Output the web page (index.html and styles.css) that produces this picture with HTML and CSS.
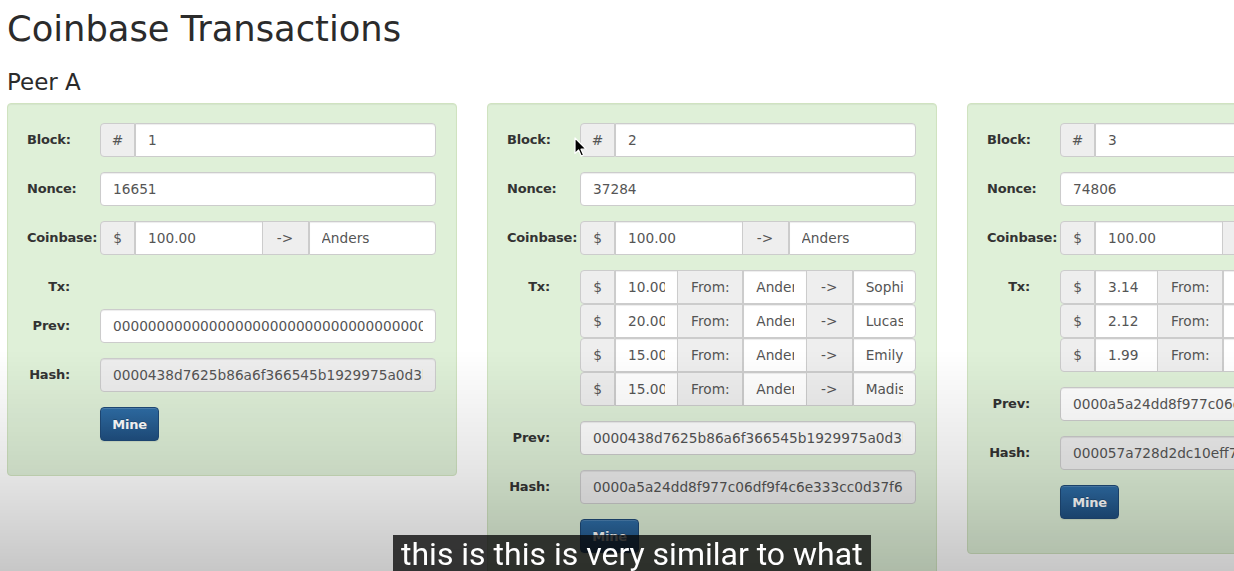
FILE: index.html
```html
<!DOCTYPE html>
<html>
<head>
<meta charset="utf-8">
<title>Coinbase Transactions</title>
<link rel="stylesheet" href="styles.css">
</head>
<body>
<div class="page">
  <h1 class="title">Coinbase Transactions</h1>
  <h3 class="peer">Peer A</h3>
  <div class="chain">

    <div class="card">
      <div class="row"><label class="lbl">Block:</label><div class="field"><div class="group"><span class="addon w-sym">#</span><input class="ctl" value="1"></div></div></div>
      <div class="row"><label class="lbl">Nonce:</label><div class="field"><input class="ctl solo" value="16651"></div></div>
      <div class="row"><label class="lbl">Coinbase:</label><div class="field"><div class="group"><span class="addon w-sym">$</span><input class="ctl" value="100.00"><span class="addon w-arrow">-&gt;</span><input class="ctl" value="Anders"></div></div></div>
      <div class="row row-empty"><label class="lbl">Tx:</label><div class="field"></div></div>
      <div class="row"><label class="lbl">Prev:</label><div class="field"><input class="ctl solo" value="0000000000000000000000000000000000000000000000000000000000000000"></div></div>
      <div class="row"><label class="lbl">Hash:</label><div class="field"><input class="ctl solo ro" readonly value="0000438d7625b86a6f366545b1929975a0d3b0c4d2a7e8c1f1c0b8a7e6d5c4b3"></div></div>
      <div class="row"><span class="lbl"></span><div class="field"><button class="btn">Mine</button></div></div>
    </div>

    <div class="card">
      <div class="row"><label class="lbl">Block:</label><div class="field"><div class="group"><span class="addon w-sym">#</span><input class="ctl" value="2"></div></div></div>
      <div class="row"><label class="lbl">Nonce:</label><div class="field"><input class="ctl solo" value="37284"></div></div>
      <div class="row"><label class="lbl">Coinbase:</label><div class="field"><div class="group"><span class="addon w-sym">$</span><input class="ctl" value="100.00"><span class="addon w-arrow">-&gt;</span><input class="ctl" value="Anders"></div></div></div>
      <div class="row"><label class="lbl">Tx:</label><div class="field">
        <div class="group"><span class="addon w-sym">$</span><input class="ctl" value="10.00"><span class="addon w-from">From:</span><input class="ctl" value="Anders"><span class="addon w-arrow">-&gt;</span><input class="ctl" value="Sophia"></div>
        <div class="group"><span class="addon w-sym">$</span><input class="ctl" value="20.00"><span class="addon w-from">From:</span><input class="ctl" value="Anders"><span class="addon w-arrow">-&gt;</span><input class="ctl" value="Lucas"></div>
        <div class="group"><span class="addon w-sym">$</span><input class="ctl" value="15.00"><span class="addon w-from">From:</span><input class="ctl" value="Anders"><span class="addon w-arrow">-&gt;</span><input class="ctl" value="Emily"></div>
        <div class="group"><span class="addon w-sym">$</span><input class="ctl" value="15.00"><span class="addon w-from">From:</span><input class="ctl" value="Anders"><span class="addon w-arrow">-&gt;</span><input class="ctl" value="Madison"></div>
      </div></div>
      <div class="row"><label class="lbl">Prev:</label><div class="field"><input class="ctl solo" value="0000438d7625b86a6f366545b1929975a0d3b0c4d2a7e8c1f1c0b8a7e6d5c4b3"></div></div>
      <div class="row"><label class="lbl">Hash:</label><div class="field"><input class="ctl solo ro" readonly value="0000a5a24dd8f977c06df9f4c6e333cc0d37f6b2a1e9d8c7b6a5f4e3d2c1b0a9"></div></div>
      <div class="row"><span class="lbl"></span><div class="field"><button class="btn">Mine</button></div></div>
    </div>

    <div class="card">
      <div class="row"><label class="lbl">Block:</label><div class="field"><div class="group"><span class="addon w-sym">#</span><input class="ctl" value="3"></div></div></div>
      <div class="row"><label class="lbl">Nonce:</label><div class="field"><input class="ctl solo" value="74806"></div></div>
      <div class="row"><label class="lbl">Coinbase:</label><div class="field"><div class="group"><span class="addon w-sym">$</span><input class="ctl" value="100.00"><span class="addon w-arrow">-&gt;</span><input class="ctl" value="Anders"></div></div></div>
      <div class="row"><label class="lbl">Tx:</label><div class="field">
        <div class="group"><span class="addon w-sym">$</span><input class="ctl" value="3.14"><span class="addon w-from">From:</span><input class="ctl" value="Sophia"><span class="addon w-arrow">-&gt;</span><input class="ctl" value="Jackson"></div>
        <div class="group"><span class="addon w-sym">$</span><input class="ctl" value="2.12"><span class="addon w-from">From:</span><input class="ctl" value="Lucas"><span class="addon w-arrow">-&gt;</span><input class="ctl" value="Emily"></div>
        <div class="group"><span class="addon w-sym">$</span><input class="ctl" value="1.99"><span class="addon w-from">From:</span><input class="ctl" value="Emily"><span class="addon w-arrow">-&gt;</span><input class="ctl" value="Madison"></div>
      </div></div>
      <div class="row"><label class="lbl">Prev:</label><div class="field"><input class="ctl solo" value="0000a5a24dd8f977c06df9f4c6e333cc0d37f6b2a1e9d8c7b6a5f4e3d2c1b0a9"></div></div>
      <div class="row"><label class="lbl">Hash:</label><div class="field"><input class="ctl solo ro" readonly value="000057a728d2dc10eff7b3c1d9e8a6f4b2c0d1e3f5a7b9c2d4e6f8a0b1c3d5e7"></div></div>
      <div class="row"><span class="lbl"></span><div class="field"><button class="btn">Mine</button></div></div>
    </div>

  </div>
</div>
<div class="shade"></div>
<div class="caption">this is this is very similar to what</div>
<svg class="cursor" width="14" height="21" viewBox="0 0 14 21"><path d="M1 1 L1 16.5 L4.6 13 L7.2 19 L9.6 18 L7 12.2 L12 12.2 Z" fill="#000" stroke="#fff" stroke-width="1.2" stroke-linejoin="round"/></svg>
</body>
</html>
```
FILE: styles.css
```css
html, body {
  margin: 0;
  padding: 0;
  overflow: hidden;
  background: #fff;
  width: 1234px;
  height: 571px;
}
body {
  font-family: "DejaVu Sans", "Liberation Sans", sans-serif;
  color: #333;
  position: relative;
}
.page {
  padding: 0 0 0 7px;
}
.title {
  margin: 10px 0 0 0;
  font-size: 35.3px;
  line-height: 38px;
  font-weight: normal;
  color: #2b2b2b;
}
.peer {
  margin: 22px 0 9px 0;
  font-size: 23px;
  line-height: 24px;
  font-weight: normal;
  color: #2b2b2b;
}
.chain {
  display: flex;
  gap: 30px;
  align-items: flex-start;
}
.card {
  flex: none;
  width: 450px;
  box-sizing: border-box;
  background: #dff0d8;
  border: 1px solid #d0e3c0;
  border-radius: 4px;
  padding: 19px 19px 4px 19px;
  box-shadow: inset 0 1px 1px rgba(0,0,0,.05);
}
.card > .row:last-child {
  margin-bottom: 30px;
}
.row {
  display: flex;
  gap: 30px;
  margin-bottom: 15px;
  align-items: flex-start;
}
.row-empty {
  height: 24px;
}
.lbl {
  flex: none;
  width: 43px;
  padding-top: 7px;
  line-height: 20px;
  text-align: right;
  white-space: nowrap;
  font-weight: bold;
  font-size: 13px;
  letter-spacing: -0.2px;
  color: #333;
}
.field {
  flex: none;
  width: 336px;
}
.group {
  display: flex;
  height: 34px;
}
.addon {
  flex: none;
  box-sizing: border-box;
  height: 34px;
  line-height: 32px;
  background: #eee;
  border: 1px solid #ccc;
  text-align: center;
  color: #555;
  font-size: 13.7px;
}
.group > * + * {
  margin-left: -1px;
}
.group > :first-child {
  border-radius: 4px 0 0 4px;
}
.group > :last-child {
  border-radius: 0 4px 4px 0;
}
.w-sym { width: 35px; }
.w-arrow { width: 47px; }
.w-from { width: 66px; }
.ctl {
  flex: 1 1 0;
  min-width: 0;
  box-sizing: border-box;
  height: 34px;
  margin: 0;
  padding: 6px 12px;
  border: 1px solid #ccc;
  border-radius: 0;
  background: #fff;
  color: #555;
  font-family: "DejaVu Sans", "Liberation Sans", sans-serif;
  font-size: 13.7px;
  box-shadow: inset 0 1px 1px rgba(0,0,0,.075);
  outline: none;
}
.solo {
  display: block;
  width: 100%;
  border-radius: 4px;
}
.ro {
  background: #eee;
}
.btn {
  display: block;
  box-sizing: border-box;
  width: 59px;
  height: 34px;
  padding: 0;
  border: 1px solid #1f4a78;
  border-radius: 4px;
  background: linear-gradient(to bottom, #2f6ea7 0%, #204f80 100%);
  color: #fff;
  font-family: "DejaVu Sans", "Liberation Sans", sans-serif;
  font-weight: bold;
  font-size: 13px;
  letter-spacing: -0.2px;
  text-shadow: 0 -1px 0 rgba(0,0,0,.2);
  box-shadow: inset 0 1px 0 rgba(255,255,255,.15), 0 1px 1px rgba(0,0,0,.075);
}
.shade {
  position: fixed;
  left: 0;
  top: 350px;
  width: 1234px;
  height: 221px;
  background: linear-gradient(to bottom, rgba(0,0,0,0) 0%, rgba(0,0,0,.1) 55%, rgba(0,0,0,.22) 100%);
  pointer-events: none;
}
.caption {
  position: fixed;
  left: 393px;
  top: 535px;
  height: 36px;
  padding: 0 8px;
  background: rgba(8,8,8,.78);
  color: #fff;
  font-family: Roboto, "Noto Sans", sans-serif;
  font-size: 32px;
  line-height: 38px;
  white-space: nowrap;
  overflow: hidden;
}
.cursor {
  position: fixed;
  left: 574px;
  top: 137px;
}
```
